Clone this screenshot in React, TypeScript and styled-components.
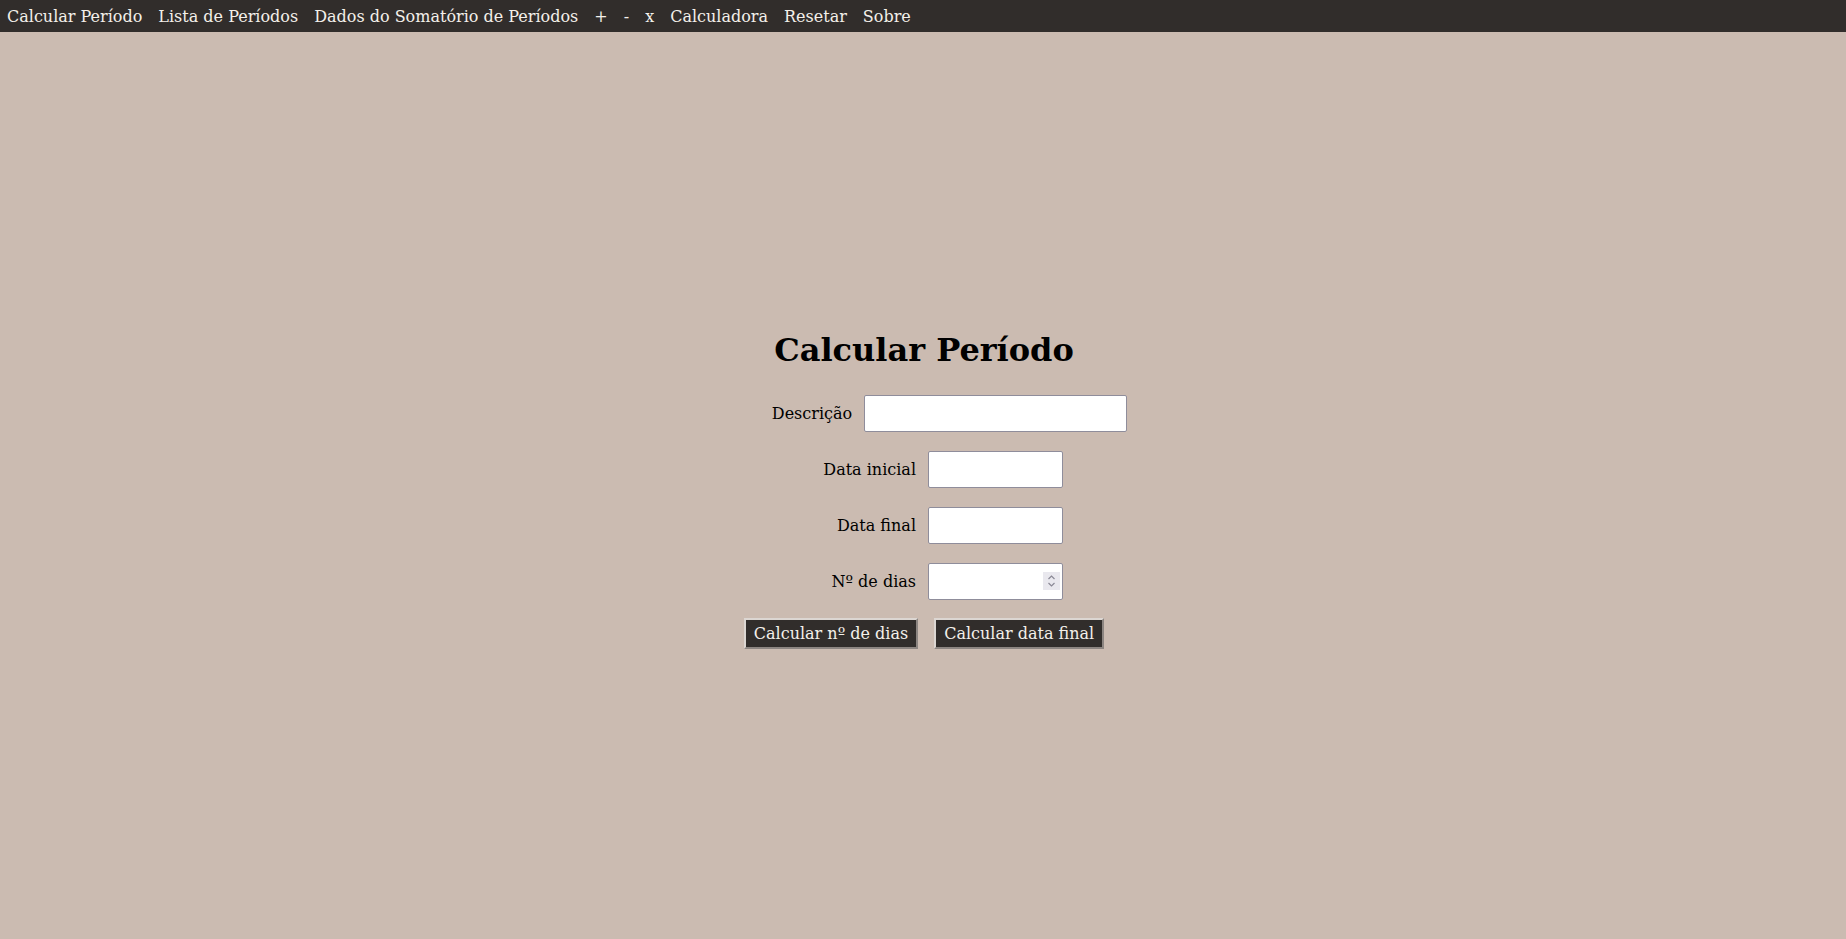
import React from "react";
import styled, { createGlobalStyle } from "styled-components";

const GlobalStyle = createGlobalStyle`
  html, body {
    margin: 0;
    padding: 0;
    background: #cbbbb1;
    font-family: "DejaVu Serif", "Liberation Serif", serif;
    font-size: 16px;
    color: #000;
  }
`;

const NavBar = styled.nav`
  display: flex;
  align-items: center;
  height: 32px;
  padding: 1px 7px 0;
  box-sizing: border-box;
  gap: 16px;
  background: #312d2b;
`;

const NavLink = styled.a`
  color: #f4f0ea;
  text-decoration: none;
  font-size: 16px;
  line-height: 31px;
  cursor: pointer;
  white-space: nowrap;
`;

const Main = styled.main`
  display: flex;
  flex-direction: column;
  align-items: center;
  justify-content: center;
  min-height: calc(100vh - 32px);
  box-sizing: border-box;
  padding-top: 8px;
`;

const Title = styled.h1`
  font-size: 32px;
  font-weight: bold;
  margin: 0 0 26px 2px;
  line-height: normal;
`;

const Form = styled.form`
  display: flex;
  flex-direction: column;
  align-items: center;
  gap: 19px;
`;

const Row = styled.div<{ $shift: number }>`
  display: flex;
  align-items: center;
  justify-content: center;
  gap: 12px;
  padding-left: ${(p) => p.$shift}px;
`;

const Label = styled.label<{ $width?: number }>`
  font-size: 16px;
  white-space: nowrap;
  text-align: right;
  width: ${(p) => (p.$width ? `${p.$width}px` : "auto")};
`;

const Field = styled.input<{ $wide?: boolean }>`
  box-sizing: border-box;
  width: ${(p) => (p.$wide ? 263 : 135)}px;
  height: 37px;
  padding: 4px 6px;
  font-family: "DejaVu Serif", serif;
  font-size: 14px;
  background: #fff;
  border: 1px solid #8f8d9b;
  border-radius: 2px;
  outline: none;
`;

const NumberWrap = styled.div`
  position: relative;
  display: flex;
`;

const Spinner = styled.span`
  position: absolute;
  right: 3px;
  top: 9px;
  width: 17px;
  height: 18px;
  background: #e9e8ee;
  display: flex;
  align-items: center;
  justify-content: center;
`;

const Buttons = styled.div`
  display: flex;
  gap: 16px;
  margin-top: -1px;
  padding-left: 2px;
`;

const Button = styled.button`
  font-family: "DejaVu Serif", "Liberation Serif", serif;
  font-size: 16px;
  line-height: 19px;
  color: #f4f0ea;
  background: #312d2b;
  padding: 4px 8px;
  border: 2px solid;
  border-color: #dcd6d2 #8c8581 #8c8581 #dcd6d2;
  border-radius: 0;
  cursor: pointer;
`;

const LABEL_W = 93;

export default function App() {
  return (
    <>
      <GlobalStyle />
      <NavBar>
        <NavLink>Calcular Período</NavLink>
        <NavLink>Lista de Períodos</NavLink>
        <NavLink>Dados do Somatório de Períodos</NavLink>
        <NavLink>+</NavLink>
        <NavLink>-</NavLink>
        <NavLink>x</NavLink>
        <NavLink>Calculadora</NavLink>
        <NavLink>Resetar</NavLink>
        <NavLink>Sobre</NavLink>
      </NavBar>
      <Main>
        <Title>Calcular Período</Title>
        <Form onSubmit={(e) => e.preventDefault()}>
          <Row $shift={53}>
            <Label htmlFor="desc">Descrição</Label>
            <Field id="desc" type="text" $wide />
          </Row>
          <Row $shift={40}>
            <Label htmlFor="ini" $width={LABEL_W}>Data inicial</Label>
            <Field id="ini" type="text" />
          </Row>
          <Row $shift={40}>
            <Label htmlFor="fim" $width={LABEL_W}>Data final</Label>
            <Field id="fim" type="text" />
          </Row>
          <Row $shift={40}>
            <Label htmlFor="dias" $width={LABEL_W}>Nº de dias</Label>
            <NumberWrap>
              <Field id="dias" type="text" />
              <Spinner>
                <svg width="9" height="14" viewBox="0 0 9 14" fill="none" stroke="#8a8895" strokeWidth="1.2">
                  <path d="M1.5 5 L4.5 2 L7.5 5" />
                  <path d="M1.5 9 L4.5 12 L7.5 9" />
                </svg>
              </Spinner>
            </NumberWrap>
          </Row>
          <Buttons>
            <Button type="button">Calcular nº de dias</Button>
            <Button type="button">Calcular data final</Button>
          </Buttons>
        </Form>
      </Main>
    </>
  );
}
